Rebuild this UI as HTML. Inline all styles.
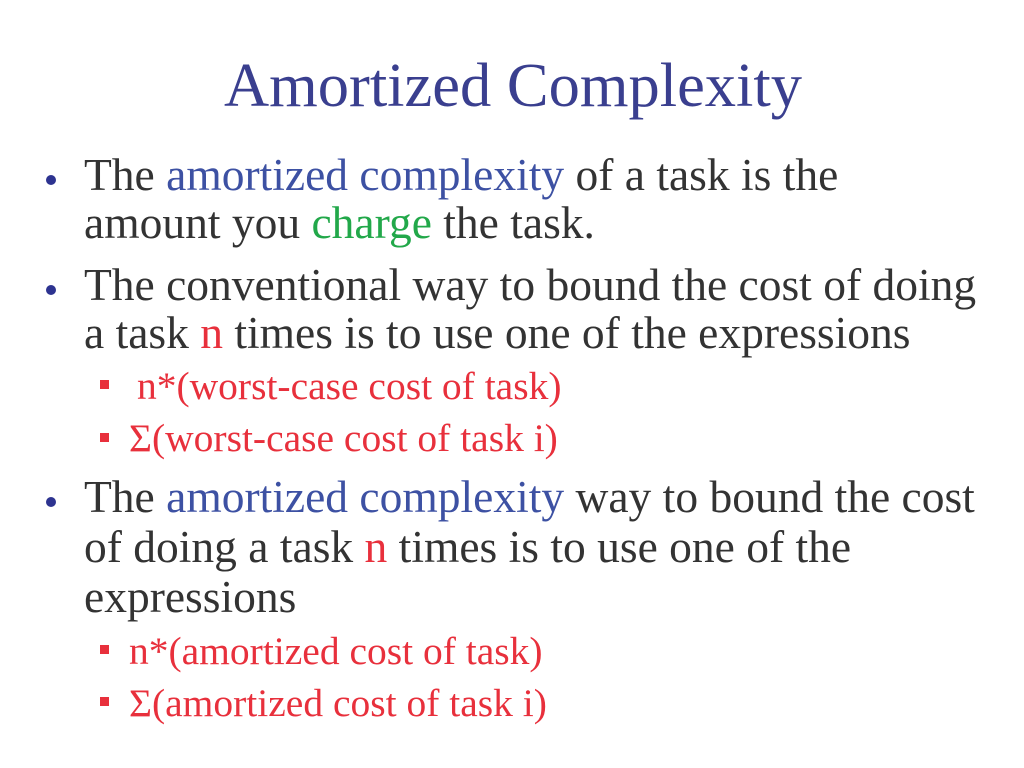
<!DOCTYPE html>
<html><head><meta charset="utf-8"><style>
body{margin:0;width:1024px;height:768px;background:#fff;position:relative;overflow:hidden;font-family:"Liberation Serif",serif;}
.l{position:absolute;white-space:nowrap;line-height:1;color:#333;}
.t{font-size:62.5px;color:#3a3f8f;}
.b{font-size:45.5px;}
.s{font-size:39.5px;color:#e8303c;}
.bl{color:#3d51a3}.g{color:#22a84a}.r{color:#e8303c}
.dot{position:absolute;width:10px;height:10px;border-radius:50%;background:#2d3390;}
.sq{position:absolute;width:9px;height:9px;background:#e8303c;}
</style></head><body>
<div class="l t" style="left:224px;top:54px">Amortized Complexity</div>

<div class="dot" style="left:46px;top:175px"></div>
<div class="l b" style="left:84px;top:152px">The <span class="bl">amortized complexity</span> of a task is the</div>
<div class="l b" style="left:84px;top:200px">amount you <span class="g">charge</span> the task.</div>

<div class="dot" style="left:46px;top:285px"></div>
<div class="l b" style="left:84px;top:262px">The conventional way to bound the cost of doing</div>
<div class="l b" style="left:84px;top:310px">a task <span class="r">n</span> times is to use one of the expressions</div>

<div class="sq" style="left:100px;top:380px"></div>
<div class="l s" style="left:137px;top:367px">n*(worst-case cost of task)</div>
<div class="sq" style="left:100px;top:433px"></div>
<div class="l s" style="left:129px;top:419px">Σ(worst-case cost of task i)</div>

<div class="dot" style="left:46px;top:497px"></div>
<div class="l b" style="left:84px;top:474px">The <span class="bl">amortized complexity</span> way to bound the cost</div>
<div class="l b" style="left:84px;top:524px">of doing a task <span class="r">n</span> times is to use one of the</div>
<div class="l b" style="left:84px;top:574px">expressions</div>

<div class="sq" style="left:100px;top:645px"></div>
<div class="l s" style="left:129px;top:632px">n*(amortized cost of task)</div>
<div class="sq" style="left:100px;top:697px"></div>
<div class="l s" style="left:129px;top:684px">Σ(amortized cost of task i)</div>
</body></html>
